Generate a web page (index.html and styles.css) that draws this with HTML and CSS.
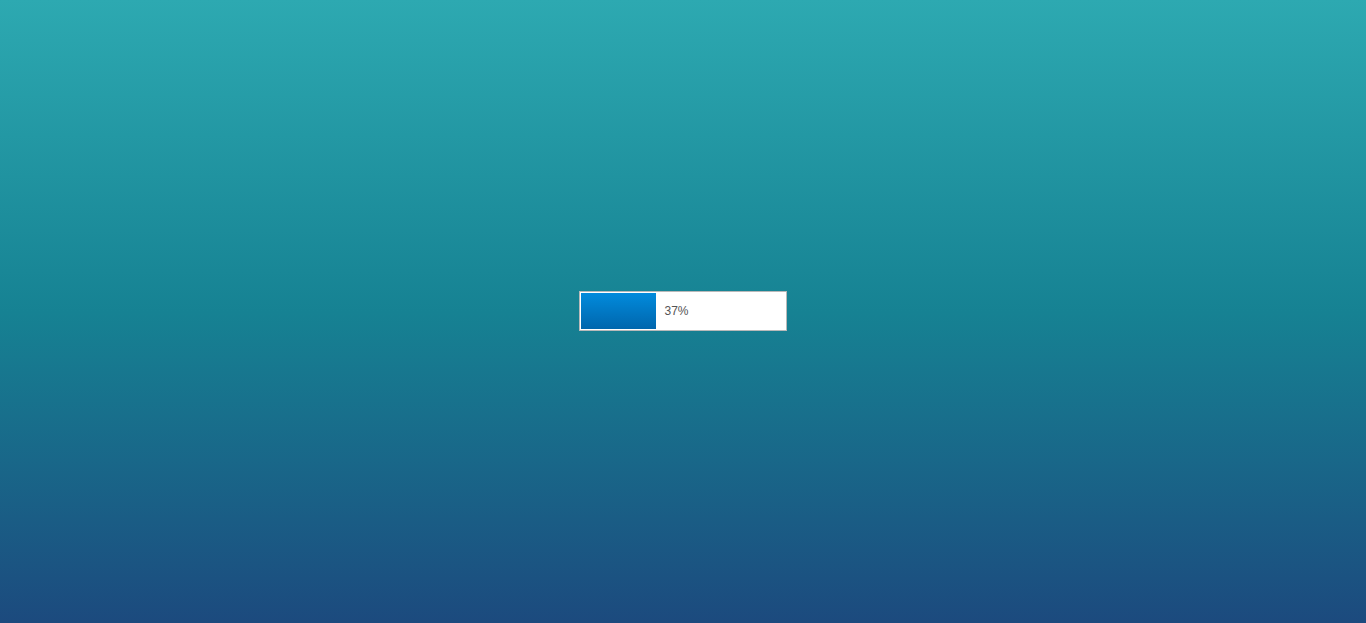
FILE: index.html
```html
<!DOCTYPE html>
<html>
<head>
<meta charset="utf-8">
<link rel="stylesheet" href="styles.css">
</head>
<body>
<div class="stage">
  <div class="progress">
    <div class="bar" style="width:37%"></div>
    <span class="label">37%</span>
  </div>
</div>
</body>
</html>
```
FILE: styles.css
```css
html, body {
  margin: 0;
  height: 100%;
}
body {
  background: linear-gradient(to bottom, #2da9b1 0%, #168293 50%, #1c4a7e 100%);
  font-family: "Liberation Sans", Arial, sans-serif;
}
.stage {
  height: 622px;
  display: flex;
  align-items: center;
  justify-content: center;
}
.progress {
  box-sizing: border-box;
  width: 208px;
  height: 40px;
  border: 1px solid #b9b9b9;
  padding: 1px;
  background: #fff;
  display: flex;
  align-items: center;
}
.bar {
  height: 36px;
  background: linear-gradient(to bottom, #028bdc 0%, #0066ad 100%);
  flex: none;
}
.label {
  margin-left: 8px;
  font-size: 12px;
  color: #555;
}
```
